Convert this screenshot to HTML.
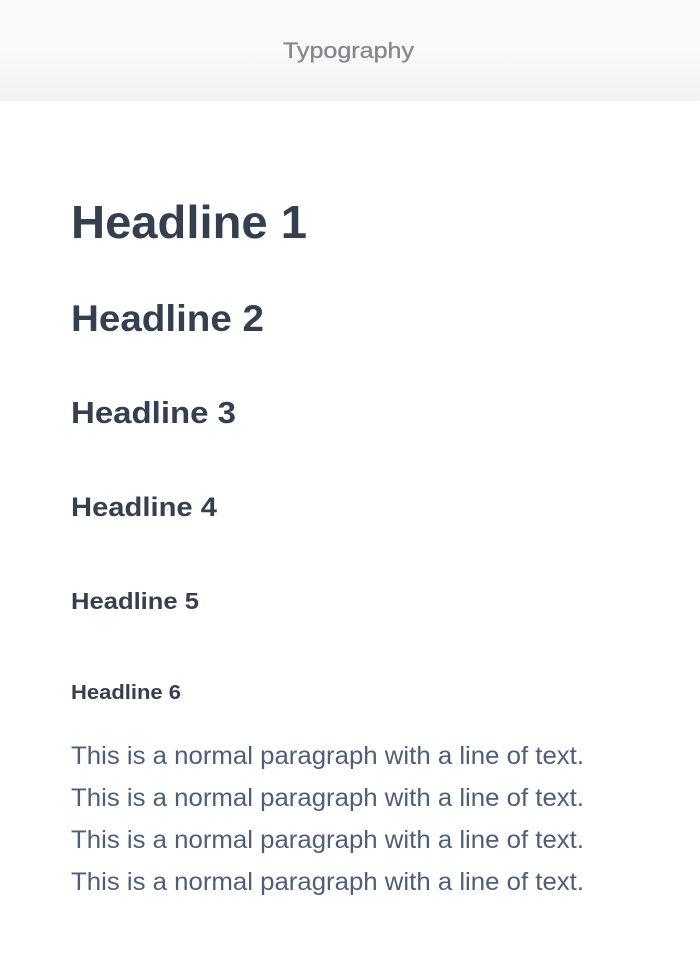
<!DOCTYPE html>
<html><head><meta charset="utf-8"><style>
html,body{margin:0;padding:0;background:#fff;width:700px;height:980px;overflow:hidden}
.hdr{position:absolute;left:0;top:0;width:700px;height:101px;background:linear-gradient(#fafafa,#f9f9f9 50%,#f2f2f2)}
svg{position:absolute;left:0;top:0}
</style></head><body>
<div class="hdr"></div>
<svg width="700" height="980" font-family="Liberation Sans, sans-serif">
<text x="283" y="58" font-size="22" fill="#83878e" stroke="#83878e" stroke-width="0.3" textLength="131" lengthAdjust="spacingAndGlyphs">Typography</text>
<g fill="#343f4f" font-weight="bold">
<text x="71" y="238" font-size="46" textLength="236" lengthAdjust="spacingAndGlyphs">Headline 1</text>
<text x="71" y="331" font-size="37" textLength="193" lengthAdjust="spacingAndGlyphs">Headline 2</text>
<text x="71" y="423" font-size="31" textLength="165" lengthAdjust="spacingAndGlyphs">Headline 3</text>
<text x="71" y="516" font-size="27" textLength="146" lengthAdjust="spacingAndGlyphs">Headline 4</text>
<text x="71" y="609" font-size="23.5" textLength="128" lengthAdjust="spacingAndGlyphs">Headline 5</text>
<text x="71" y="699" font-size="20" textLength="110" lengthAdjust="spacingAndGlyphs">Headline 6</text>
</g>
<g fill="#4d5f78" font-size="25">
<text x="71" y="764" textLength="513" lengthAdjust="spacingAndGlyphs">This is a normal paragraph with a line of text.</text>
<text x="71" y="806" textLength="513" lengthAdjust="spacingAndGlyphs">This is a normal paragraph with a line of text.</text>
<text x="71" y="848" textLength="513" lengthAdjust="spacingAndGlyphs">This is a normal paragraph with a line of text.</text>
<text x="71" y="890" textLength="513" lengthAdjust="spacingAndGlyphs">This is a normal paragraph with a line of text.</text>
</g>
</svg>
</body></html>
